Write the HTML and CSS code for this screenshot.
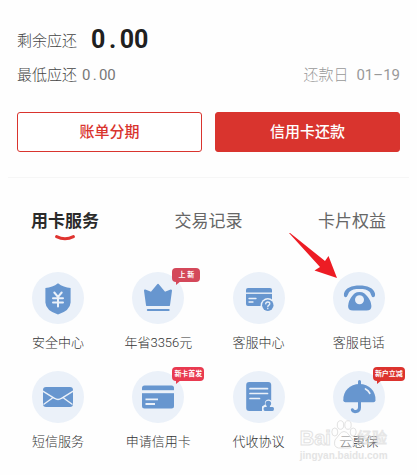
FILE: index.html
```html
<!DOCTYPE html>
<html lang="zh-CN">
<head>
<meta charset="utf-8">
<meta name="viewport" content="width=device-width, initial-scale=1">
<title>信用卡</title>
<link rel="stylesheet" href="styles.css">
</head>
<body>
<main>
  <section class="bill">
    <div class="row total"><span class="name">剩余应还</span><strong class="sum">0<span class="dot">.</span>00</strong></div>
    <div class="row minimum"><span class="name">最低应还</span><span class="num">0<span class="dot">.</span>00</span><span class="due">还款日<span class="date">01–19</span></span></div>
    <div class="actions">
      <button type="button" class="btn outline">账单分期</button>
      <button type="button" class="btn solid">信用卡还款</button>
    </div>
  </section>
  <hr class="divider">
  <nav class="tabs">
    <a href="#service" class="tab active">用卡服务
      <svg class="smile" width="20" height="6" viewBox="0 0 20 6"><path d="M1.600 1.600Q10 6 18.400 1.600" fill="none" stroke="#df3430" stroke-width="3" stroke-linecap="round"/></svg>
    </a>
    <a href="#records" class="tab">交易记录</a>
    <a href="#benefits" class="tab">卡片权益</a>
  </nav>
  <section class="grid" id="service">
    <a class="item" href="#security">
      <span class="disc"><svg viewBox="0 0 52 52"><path class="f" d="M26 11.300Q31.500 15.600 38.600 16V30.500Q38.200 38.500 26 42.500Q13.800 38.500 13.400 30.500V16Q20.500 15.600 26 11.300Z"/><path class="w" stroke-width="2" d="M22.300 20.500L26 25L29.700 20.500M21 26.200H31M21 30.500H31M26 25V34.500"/></svg></span>
      <span class="label">安全中心</span>
    </a>
    <a class="item" href="#member">
      <span class="disc"><svg viewBox="0 0 52 52"><path class="f r" d="M13 18.500L19.300 21L26 12.800L32.700 21L39 18.500L37 33H15Z"/><path class="l" stroke-width="2" d="M15.800 38H36.700"/></svg><span class="badge rose">上 新</span></span>
      <span class="label">年省3356元</span>
    </a>
    <a class="item" href="#help">
      <span class="disc"><svg viewBox="0 0 52 52"><rect class="f" x="13" y="16" width="26" height="18" rx="2"/><path class="w b" stroke-width="1.400" d="M13 21.200H39"/><path class="w" stroke-width="1.300" d="M16 26.500H23M16 30H20"/><circle cx="34.800" cy="33.300" r="7.200" fill="#ebf1f9"/><circle class="f" cx="34.800" cy="33.300" r="5.700"/><path class="w" stroke-width="1.300" d="M32.700 31.900Q32.800 30 34.800 30Q36.800 30 36.800 31.700C36.800 33.200 34.800 33 34.800 34.700M34.800 36.500V36.700"/></svg></span>
      <span class="label">客服中心</span>
    </a>
    <a class="item" href="#phone">
      <span class="disc"><svg viewBox="0 0 52 52"><path class="f" d="M12.700 25.300Q10.500 25.300 11 21.500C12 16 19 13.400 26.500 13.400S41 16 42 21.500Q42.500 25.300 40 25.300C38.500 25.300 38.200 22 36.500 19.800C34.500 17.500 31 17 26.500 17S18.500 17.500 16.500 19.800C14.800 22 14.500 25.300 12.700 25.300Z"/><path class="f" d="M26.500 20C22.500 20 20.500 22 19 24.300Q15.500 28.500 15.100 34Q15 38.500 20 38.500H33.500Q38.500 38.500 38.400 34Q38 28.500 34.200 24.300C32.500 22 30.500 20 26.500 20Z"/><circle cx="26.500" cy="27.800" r="4.500" fill="#ebf1f9"/></svg></span>
      <span class="label">客服电话</span>
      <svg class="arrow" width="48" height="45" viewBox="0 0 48 45"><path d="M0 0Q.8-.4 2 .7L36 28L39.500 23L48 45L25.500 37.500L31 34Z" fill="#ed1c24"/></svg>
    </a>
    <a class="item" href="#sms">
      <span class="disc"><svg viewBox="0 0 52 52"><rect class="f" x="11" y="16" width="30" height="20" rx="3"/><path class="w b" stroke-width="1.400" d="M10 19.600L22.500 27.300Q26 29.800 29.500 27.300L42 19.600M11.500 33.500L20.500 27M40.500 33.500L31.500 27"/></svg></span>
      <span class="label">短信服务</span>
    </a>
    <a class="item" href="#apply">
      <span class="disc"><svg viewBox="0 0 52 52"><rect class="f" x="10" y="14.500" width="32" height="23" rx="2.500"/><path class="w b" stroke-width="3" d="M10 20.700H42"/><path class="w b" stroke-width="1.800" d="M13.500 28.300H26M13.500 33H23"/></svg><span class="badge pink">新卡首发</span></span>
      <span class="label">申请信用卡</span>
    </a>
    <a class="item" href="#agreement">
      <span class="disc"><svg viewBox="0 0 52 52"><rect class="f" x="13.200" y="11" width="25" height="29" rx="3"/><path class="w" stroke-width="1.700" d="M17 17.700H34.500M17 22.500H34.500M17 27.500H26.500"/><path fill="#ebf1f9" d="M29 42V35.500L32 33.500Q31.200 29 35.500 28.500Q38.500 28.500 40 32V35L43 42Z"/><circle cx="35.300" cy="32.500" r="2.800" class="f"/><path class="f" d="M34 34H36.600L37 36H39.500Q41 36 41 37.700Q41 40 39.500 40H32Q30.500 40 30.500 37.700Q30.500 36 32 36H33.600Z"/></svg></span>
      <span class="label">代收协议</span>
    </a>
    <a class="item" href="#insurance">
      <span class="disc"><svg viewBox="0 0 52 52"><path class="l" stroke-width="3" d="M26.500 10.500V15M26.500 29V36.500C26.500 41.500 20 41.500 19.300 38.700"/><path class="f" d="M10.300 29.500C9.800 20 17 13 26.500 13S43 20 42.500 29.500Q42.300 31.200 40.500 31.200H12.300Q10.500 31.200 10.300 29.500Z"/><path class="w" stroke-width="1.700" d="M32.500 18Q35.500 19.500 36.800 22.300"/></svg><span class="badge red">新户立减</span></span>
      <span class="label">云惠保</span>
      <span class="mark">
        <span class="brand">Bai<svg width="26" height="29" viewBox="0 0 26 29"><g fill="#fff" fill-opacity=".4" stroke="#e2e2e2"><ellipse cx="3.800" cy="12" rx="3" ry="4"/><ellipse cx="9.500" cy="5" rx="3.200" ry="4.300"/><ellipse cx="17" cy="5" rx="3.200" ry="4.300"/><ellipse cx="22.200" cy="12" rx="3" ry="4"/><path d="M13 11.500Q16 11.500 18 15L22 20Q24 27 18.500 28H7.500Q2 27 4 20L8 15Q10 11.500 13 11.500Z"/></g></svg><span class="brand-cn">经验</span></span>
        <span class="site">jingyan.baidu.com</span>
      </span>
    </a>
  </section>
</main>
</body>
</html>
```
FILE: styles.css
```css
* { box-sizing: border-box; }
body {
  margin: 0;
  background: #fefefe;
  color: #666;
  font-family: Roboto, "Noto Sans CJK SC", sans-serif;
  overflow-x: hidden;
}
a { color: inherit; text-decoration: none; }
.bill { padding: 23px 17px 0; }
.row { display: flex; align-items: center; font-size: 15px; }
.total { height: 32px; }
.minimum { height: 24px; margin-top: 8px; align-items: baseline; }
.name { font-size: 15px; font-weight: 300; color: #444; }
.sum { margin-left: 14px; font-size: 25px; font-weight: 700; color: #202020; }
.num { margin-left: 5px; color: #777; }
.dot { display: inline-block; width: 1ch; text-align: center; }
.due { margin-left: auto; color: #999; font-weight: 300; }
.date { margin-left: 8px; font-weight: 400; }
.actions { display: flex; gap: 13px; margin-top: 25px; }
.btn {
  flex: 1;
  height: 40px;
  padding: 0;
  border: 1px solid #d9342e;
  border-radius: 3px;
  font: 500 15px/24px Roboto, "Noto Sans CJK SC", sans-serif;
}
.outline { background: #fff; color: #d9342e; }
.solid { background: #d9342e; color: #fff; }
.divider { height: 1px; margin: 25px 8px 0; border: 0; background: #f6f6f6; }
.tabs { display: flex; justify-content: space-between; padding: 31px 31px 0; }
.tab { font-size: 17px; line-height: 24px; }
.active { font-weight: 700; color: #2b2b2b; }
.smile { display: block; margin: 2px auto 0; }
.grid {
  display: grid;
  grid-template-columns: repeat(4, 1fr);
  row-gap: 19px;
  padding: 31px 8px 14px;
}
.item { position: relative; display: flex; flex-direction: column; align-items: center; }
.disc { position: relative; width: 52px; height: 52px; border-radius: 50%; background: #ebf1f9; }
.disc svg { display: block; width: 52px; height: 52px; }
.f { fill: #6796cf; }
.r { stroke: #6796cf; stroke-width: 2; stroke-linejoin: round; }
.l { fill: none; stroke: #6796cf; stroke-linecap: round; }
.w { fill: none; stroke: #ebf1f9; stroke-linecap: round; }
.b { stroke-linecap: butt; }
.label { margin-top: 9px; font-size: 13px; line-height: 19px; font-weight: 300; color: #333; white-space: nowrap; }
.badge {
  position: absolute;
  left: 40px;
  top: -4px;
  min-width: 28px;
  height: 14px;
  padding: 0 2px;
  border-radius: 4px;
  color: #fff;
  font-size: 7px;
  line-height: 14px;
  font-weight: 700;
  text-align: center;
  white-space: nowrap;
}
.badge::after {
  content: "";
  position: absolute;
  left: 4px;
  top: 13px;
  border-top: 4px solid;
  border-right: 5px solid transparent;
}
.rose { background: #d4485a; }
.rose::after { border-top-color: #d4485a; }
.pink { background: #e93a50; }
.pink::after { border-top-color: #e93a50; }
.red { background: #dc332e; }
.red::after { border-top-color: #dc332e; }
.arrow { position: absolute; left: -20px; top: -39px; }
.mark {
  position: absolute;
  left: -9px;
  top: 49px;
  display: flex;
  flex-direction: column;
  font-family: "Liberation Sans", "Noto Sans CJK SC", sans-serif;
  font-weight: 700;
  color: rgba(255, 255, 255, .4);
  -webkit-text-stroke: 1px #e2e2e2;
  white-space: nowrap;
}
.brand { display: flex; align-items: flex-end; font-size: 20px; line-height: 22px; }
.brand-cn { font-size: 15px; font-weight: 400; -webkit-text-stroke: 1px rgba(215, 215, 215, .6); }
.site { font-size: 10px; line-height: 14px; -webkit-text-stroke: 0; color: #e4e4e4; }
```
